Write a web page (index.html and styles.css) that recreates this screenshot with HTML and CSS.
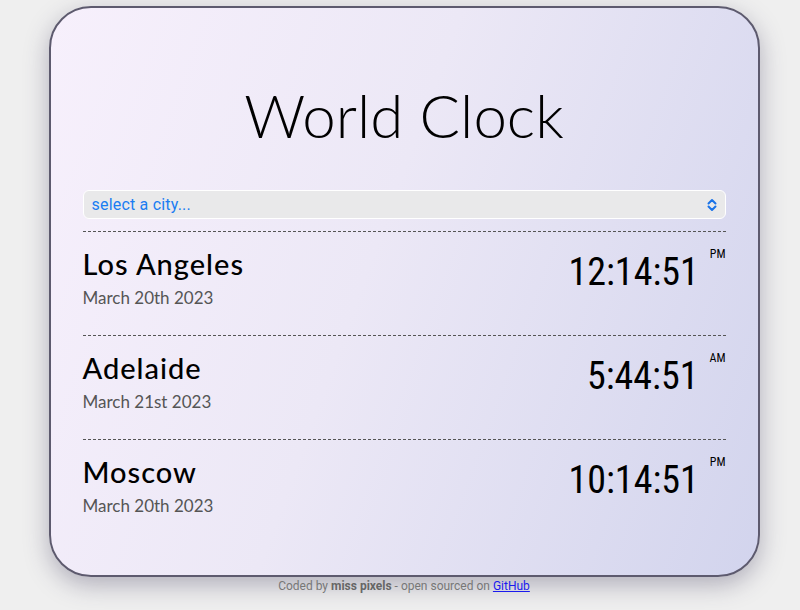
FILE: index.html
```html
<!DOCTYPE html>
<html lang="en">
<head>
<meta charset="utf-8">
<title>World Clock</title>
<link rel="stylesheet" href="styles.css">
</head>
<body>
<main class="card">
  <h1 class="title">World Clock</h1>
  <div class="select">
    <span class="select-text">select a city...</span>
    <svg class="chev" width="12" height="14" viewBox="0 0 12 14" fill="none" stroke="#1a73e8" stroke-width="2" stroke-linecap="round" stroke-linejoin="round"><path d="M2.5 5.5 L6 2 L9.5 5.5"/><path d="M2.5 8.5 L6 12 L9.5 8.5"/></svg>
  </div>
  <section class="cities">
    <div class="city">
      <div class="info">
        <div class="name">Los Angeles</div>
        <div class="date">March 20th 2023</div>
      </div>
      <div class="time">12:14:51<small class="ampm">PM</small></div>
    </div>
    <div class="city">
      <div class="info">
        <div class="name">Adelaide</div>
        <div class="date">March 21st 2023</div>
      </div>
      <div class="time">5:44:51<small class="ampm">AM</small></div>
    </div>
    <div class="city">
      <div class="info">
        <div class="name">Moscow</div>
        <div class="date">March 20th 2023</div>
      </div>
      <div class="time">10:14:51<small class="ampm">PM</small></div>
    </div>
  </section>
</main>
<footer class="footer">Coded by <strong>miss pixels</strong> - open sourced on <a href="#">GitHub</a></footer>
</body>
</html>
```

FILE: styles.css
```css
html {
  background: #efefef;
  min-height: 610px;
}
body {
  margin: 0;
  min-height: 610px;
  box-sizing: border-box;
  background: #efefef;
  padding: 6px 0 0 8px;
  font-family: Lato, "Noto Sans", sans-serif;
}
.card {
  box-sizing: border-box;
  width: 711px;
  height: 571px;
  margin: 0 auto;
  border: 2px solid #5d5a6e;
  border-radius: 42px;
  background: linear-gradient(110deg, #f7f0fc 0%, #ece8f6 45%, #d2d4ed 100%);
  box-shadow: 0 8px 24px rgba(60, 55, 90, 0.35);
  padding: 70px 32px 0 32px;
}
.title {
  margin: 0;
  text-align: center;
  font-family: Lato, sans-serif;
  font-weight: 300;
  font-size: 60px;
  line-height: 74px;
  color: #000;
}
.select {
  margin-top: 38px;
  height: 29px;
  box-sizing: border-box;
  border: 1px solid #ffffff;
  border-radius: 6px;
  background: #e9e9ea;
  display: flex;
  align-items: center;
  justify-content: space-between;
  padding: 0 7px 0 8px;
}
.select-text {
  font-family: Roboto, sans-serif;
  font-size: 16px;
  letter-spacing: 0.2px;
  color: #1a7df2;
}
.cities {
  margin-top: 12px;
}
.city {
  border-top: 1px dashed #555;
  height: 104px;
  box-sizing: border-box;
  display: flex;
  justify-content: space-between;
  padding-top: 14px;
}
.name {
  font-family: Lato, sans-serif;
  font-weight: 500;
  font-size: 29px;
  letter-spacing: 1px;
  line-height: 36px;
  color: #000;
}
.date {
  margin-top: 5px;
  font-family: Lato, sans-serif;
  font-size: 17px;
  color: #555;
}
.time {
  font-family: "Roboto Condensed", Roboto, sans-serif;
  font-stretch: condensed;
  font-size: 38px;
  line-height: 44px;
  color: #000;
  display: flex;
  align-items: flex-start;
  padding-top: 4px;
}
.ampm {
  font-family: Roboto, sans-serif;
  font-size: 12px;
  line-height: 14px;
  margin-left: 11px;
  margin-top: -3px;
}
.footer {
  text-align: center;
  font-family: Roboto, sans-serif;
  font-size: 12px;
  color: #777;
  margin-top: 2px;
}
.footer strong {
  font-weight: 700;
  color: #666;
}
.footer a {
  color: #1a1aee;
}
```
